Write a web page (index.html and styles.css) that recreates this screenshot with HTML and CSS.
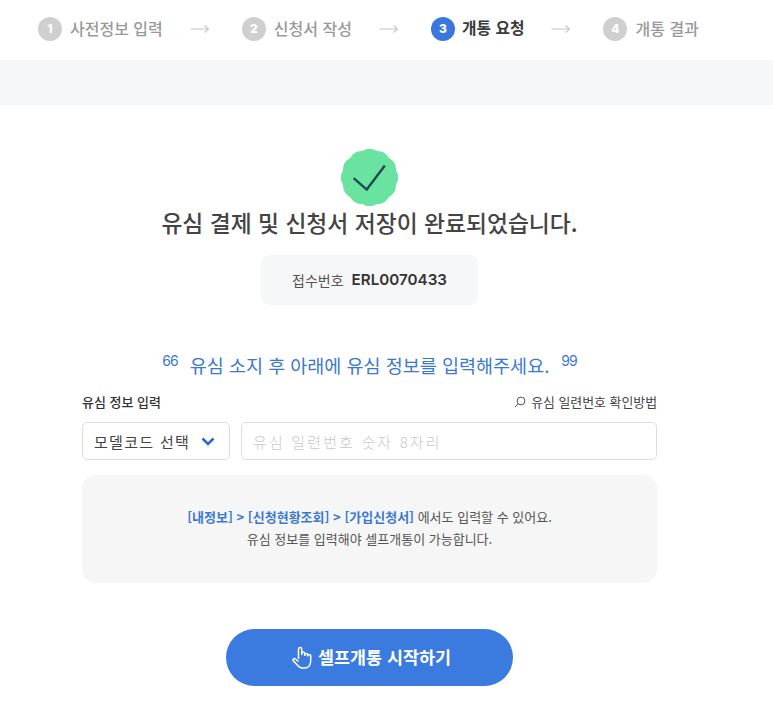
FILE: index.html
```html
<!DOCTYPE html>
<html lang="ko">
<head>
<meta charset="utf-8">
<title>유심 결제 완료</title>
<link rel="stylesheet" href="styles.css">
</head>
<body>
<nav class="steps">
  <div class="step"><span class="num">1</span><span class="label">사전정보 입력</span></div>
  <svg class="arrow" width="19" height="10" viewBox="0 0 19 10"><path d="M0.5 5H18.500M14.500 1.500L18.500 5L14.500 8.500"/></svg>
  <div class="step"><span class="num">2</span><span class="label">신청서 작성</span></div>
  <svg class="arrow" width="19" height="10" viewBox="0 0 19 10"><path d="M0.5 5H18.500M14.500 1.500L18.500 5L14.500 8.500"/></svg>
  <div class="step active"><span class="num">3</span><span class="label">개통 요청</span></div>
  <svg class="arrow" width="19" height="10" viewBox="0 0 19 10"><path d="M0.5 5H18.500M14.500 1.500L18.500 5L14.500 8.500"/></svg>
  <div class="step"><span class="num">4</span><span class="label">개통 결과</span></div>
</nav>
<div class="band"></div>
<main class="content">
  <svg class="badge" width="57" height="57" viewBox="2 2 52 52">
    <path class="badge-bg" d="M34.47 3.85A12 12 0 0 1 45.68 10.32A12 12 0 0 1 52.15 21.53A12 12 0 0 1 52.15 34.47A12 12 0 0 1 45.68 45.68A12 12 0 0 1 34.47 52.15A12 12 0 0 1 21.53 52.15A12 12 0 0 1 10.32 45.68A12 12 0 0 1 3.85 34.47A12 12 0 0 1 3.85 21.53A12 12 0 0 1 10.32 10.32A12 12 0 0 1 21.53 3.85A12 12 0 0 1 34.47 3.85Z"/>
    <path class="badge-check" d="M13.5 28.5L25.5 39L42 17"/>
  </svg>
  <h1 class="title">유심 결제 및 신청서 저장이 완료되었습니다.</h1>
  <div class="receipt"><span class="receipt-label">접수번호</span><strong class="receipt-no">ERL0070433</strong></div>
  <p class="guide"><span class="mark">66</span><span>유심 소지 후 아래에 유심 정보를 입력해주세요.</span><span class="mark">99</span></p>
  <div class="field-head">
    <span class="field-title">유심 정보 입력</span>
    <span class="help">
      <svg width="12" height="12" viewBox="0 0 12 12"><circle cx="7" cy="5" r="3.900"/><path d="M4.200 7.800L1 11"/></svg>
      유심 일련번호 확인방법
    </span>
  </div>
  <div class="field-row">
    <div class="select"><span>모델코드 선택</span>
      <svg width="14" height="9" viewBox="0 0 14 9"><path d="M1.500 1.500L7 7L12.500 1.500"/></svg>
    </div>
    <div class="input">유심 일련번호 숫자 8자리</div>
  </div>
  <div class="notice">
    <p><span class="link">[내정보] &gt; [신청현황조회] &gt; [가입신청서]</span> 에서도 입력할 수 있어요.</p>
    <p>유심 정보를 입력해야 셀프개통이 가능합니다.</p>
  </div>
  <button class="cta" type="button">
    <svg width="20" height="23" viewBox="0 0 20 23"><path d="M6.500 13V3a1.600 1.600 0 0 1 3.200 0V9M9.700 9V7.500a1.500 1.500 0 0 1 3 0V10M12.700 9a1.500 1.500 0 0 1 3 0v1.500M15.700 10a1.500 1.500 0 0 1 3 0v4.500c0 4.500-2.300 7.500-6 7.500h-2.400c-2.300 0-3.600-1-4.800-2.800L1.300 14.800c-.9-1.500.9-3 2.200-1.800L6.500 15.500"/></svg>
    <span>셀프개통 시작하기</span>
  </button>
</main>
</body>
</html>
```
FILE: styles.css
```css
* { box-sizing: border-box; }
html, body { margin: 0; padding: 0; background: #fff; }
body {
  font-family: "Noto Sans CJK KR", "Noto Sans", sans-serif;
  color: #333;
  width: 773px;
  height: 718px;
  overflow: hidden;
}
.steps {
  display: flex;
  align-items: center;
  height: 60px;
  padding: 0 0 2px 38px;
}
.step { display: flex; align-items: center; gap: 8px; }
.num {
  width: 24px;
  height: 24px;
  border-radius: 50%;
  background: #cfcfcf;
  color: #fff;
  font: 800 12px/24px Inter, sans-serif;
  text-align: center;
}
.label {
  font-size: 16px;
  font-weight: 500;
  line-height: 24px;
  color: #999;
  padding-bottom: 2px;
}
.active { gap: 7px; }
.active .num { background: #3b78de; }
.active .label { color: #3a3a3a; font-weight: 700; font-size: 15.800px; }
.arrow { margin: 0 33px 0 27px; fill: none; stroke: #c6c6c6; stroke-width: 1.100; }
.band { height: 45px; background: #f6f7f9; }
.content {
  width: 575px;
  margin-left: 82px;
  display: flex;
  flex-direction: column;
  align-items: center;
}
.badge { margin-top: 44px; display: block; }
.badge-bg { fill: #6ae3a0; }
.badge-check { fill: none; stroke: #1f4a4f; stroke-width: 2.200; }
.title {
  margin: 1px 0 0;
  font-size: 22.800px;
  line-height: 32px;
  font-weight: 500;
  color: #444;
  white-space: nowrap;
}
.receipt {
  width: 217px;
  height: 50px;
  margin-top: 16px;
  border-radius: 8px;
  background: #f6f7f9;
  display: flex;
  align-items: center;
  justify-content: center;
  gap: 8px;
}
.receipt-label { font-size: 14px; color: #555; }
.receipt-no { font: 600 15.200px/20px Inter, sans-serif; color: #333; }
.guide {
  margin: 45px 0 0;
  height: 30px;
  display: flex;
  align-items: center;
  justify-content: center;
  gap: 12px;
  font-size: 18.500px;
  line-height: 30px;
  color: #3b79cf;
  white-space: nowrap;
}
.mark {
  font: 400 14px/15px Inter, sans-serif;
  letter-spacing: -1px;
  align-self: flex-start;
  margin-top: 3px;
}
.field-head {
  width: 100%;
  margin-top: 12px;
  height: 20px;
  display: flex;
  justify-content: space-between;
  align-items: center;
  font-size: 13px;
  line-height: 20px;
}
.field-title { font-weight: 500; color: #333; }
.help { display: flex; align-items: center; gap: 5px; color: #444; font-size: 12.900px; }
.help svg { fill: none; stroke: #555; stroke-width: 1; }
.field-row { width: 100%; margin-top: 10px; display: flex; gap: 11px; }
.select, .input {
  height: 38px;
  border: 1px solid #dedede;
  border-radius: 5px;
  background: #fff;
  display: flex;
  align-items: center;
}
.select {
  width: 148px;
  padding: 0 14px 0 11px;
  justify-content: space-between;
  font-size: 15px;
  letter-spacing: 1.300px;
  color: #444;
}
.select svg { fill: none; stroke: #2e6bc9; stroke-width: 2.600; }
.input {
  flex: 1;
  padding: 0 11px;
  font-size: 15px;
  font-weight: 300;
  letter-spacing: 2.150px;
  color: #c9c9c9;
}
.notice {
  width: 100%;
  height: 108px;
  margin-top: 15px;
  padding-bottom: 4px;
  border-radius: 14px;
  background: #f6f6f6;
  display: flex;
  flex-direction: column;
  justify-content: center;
  align-items: center;
  gap: 3px;
  font-size: 13px;
  line-height: 19px;
  color: #555;
}
.notice p { margin: 0; }
.link { color: #3b79cf; font-weight: 700; }
.cta {
  width: 287px;
  height: 57px;
  margin-top: 46px;
  padding: 0 0 3px 4px;
  border: 0;
  border-radius: 29px;
  background: #3b7be0;
  color: #fff;
  font-family: inherit;
  font-size: 17.400px;
  font-weight: 700;
  display: flex;
  align-items: center;
  justify-content: center;
  gap: 6px;
}
.cta svg { fill: none; stroke: #fff; stroke-width: 1.500; margin-top: 3px; }
```
